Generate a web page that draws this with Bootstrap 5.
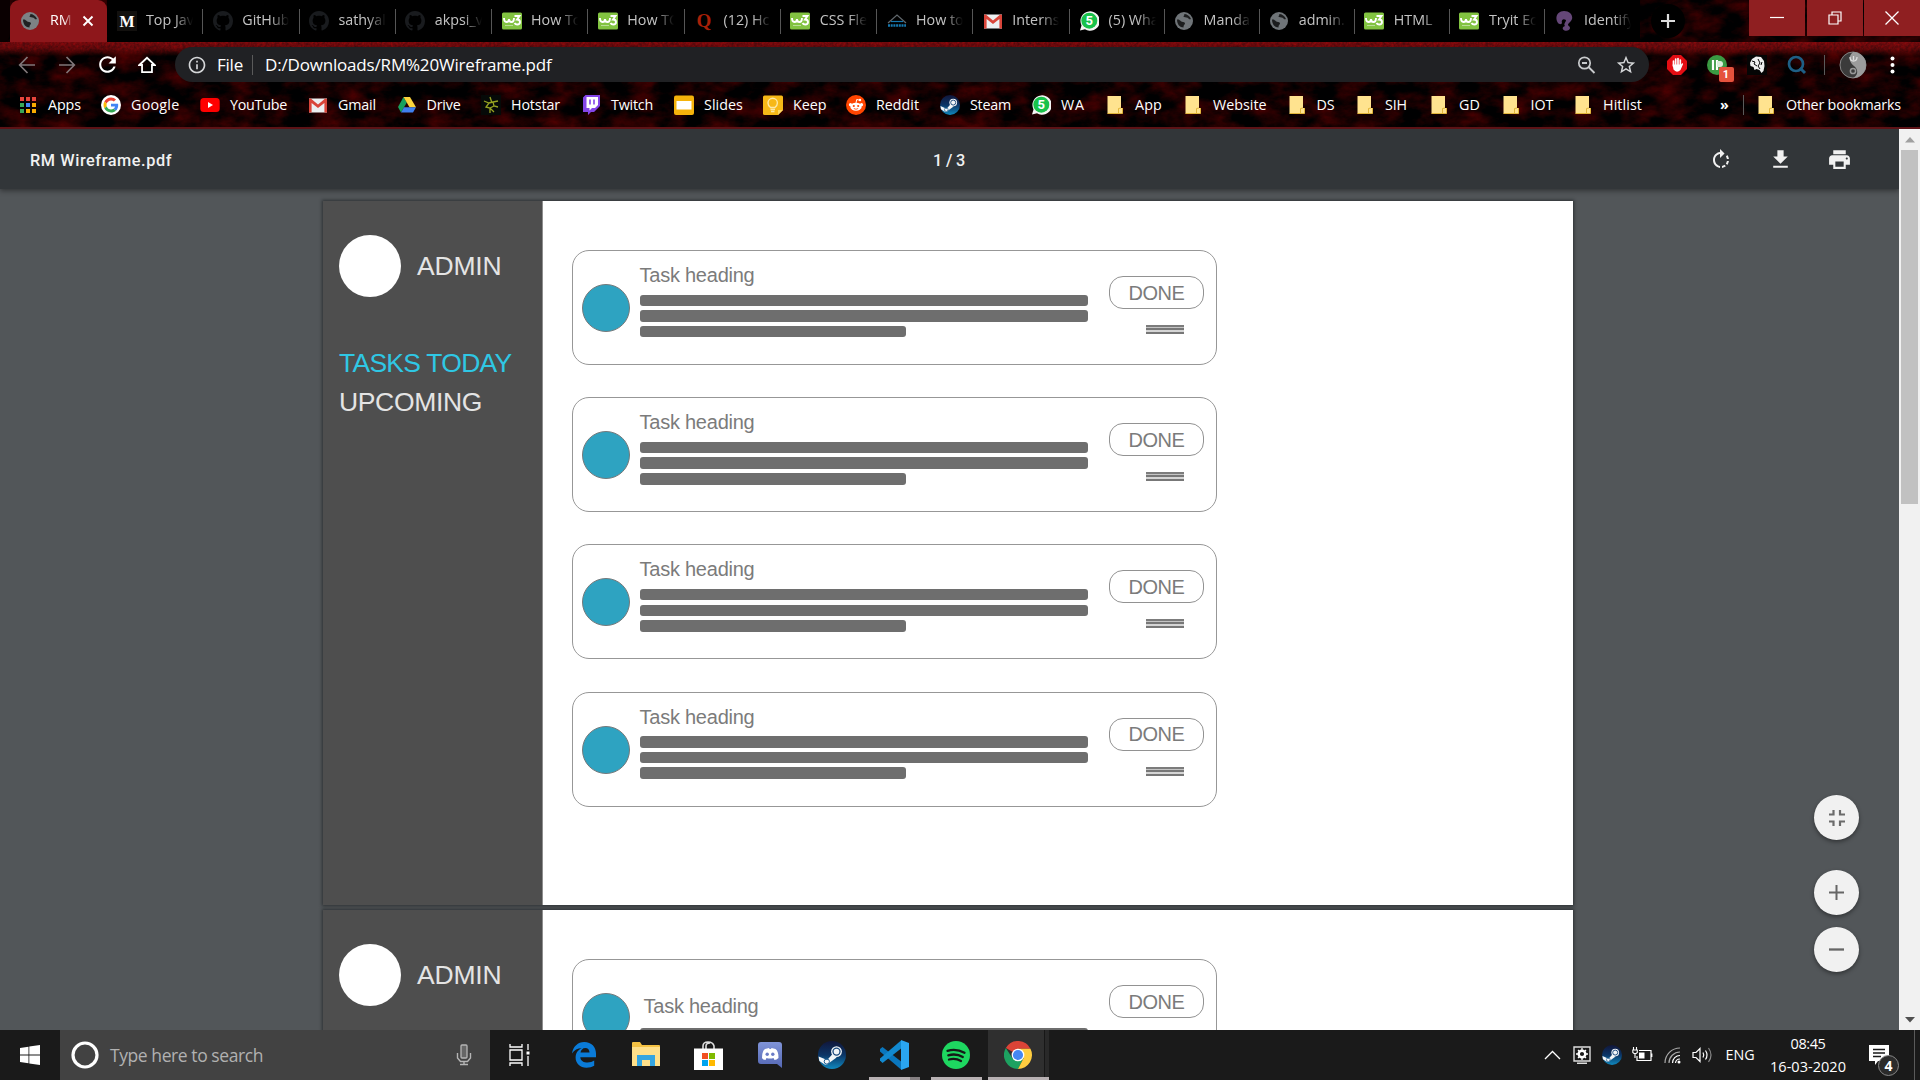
<!DOCTYPE html>
<html lang="en">
<head>
<meta charset="utf-8">
<meta name="viewport" content="width=device-width, initial-scale=1">
<title>RM Wireframe.pdf</title>
<link href="https://cdn.jsdelivr.net/npm/bootstrap@5.3.0/dist/css/bootstrap.min.css" rel="stylesheet">
<style>
body{font-family:"Open Sans","Noto Sans",sans-serif;font-size:14.3px;line-height:20px;color:#fff;background:#525659}
svg{display:block;flex:none}
.chrome-top{height:129px;background:#100102;border-bottom:2px solid #5c1216}
.leather{left:0;top:0}
.tabstrip{height:42px}
.tab-on{width:97px;margin-left:10px;background:#8e171b;border-radius:9px 9px 0 0;padding-left:10px}
.tab-first{width:10px;margin-right:-10px;background:#0a0001;border-radius:0 0 8px 0}
.tab-off{width:96.25px;background:#000;padding-left:9.5px;color:#c3c3c3}
.tab-off:nth-of-type(n+11){width:95.1px}
.tab-off:first-of-type{border-radius:0 0 0 8px}
.tab-off::after{content:"";position:absolute;right:0;top:9px;width:1px;height:25px;background:#565656}
.tab-off:last-of-type::after{display:none}
.tab-text{width:48px;height:22px;margin-left:9.500px;overflow:hidden;white-space:nowrap;-webkit-mask-image:linear-gradient(90deg,#000 60%,transparent 98%);mask-image:linear-gradient(90deg,#000 60%,transparent 98%)}
.tab-on .tab-text{width:23px;margin-left:10px}
.plus{width:34px;height:34px;border-radius:50%;background:#000;margin:4px 0 0 11px}
.winbtn{width:56px;height:36px;background:#8f1f21}
.toolbar-row{height:45px;padding:5px 0 5px 7px}
.cell40{width:40px}
.omni{width:1474px;height:35px;border-radius:18px;background:#202124;margin:0 7.500px 0 8px;padding-left:12px;font-size:17px}
.vbar{width:1px;background:#5a5a5a}
.bm-row{height:36px;padding-left:18px}
.bm{height:24px}
.bm-ico{width:20px;margin-right:10px}
.lbl{display:inline-block;white-space:nowrap}
.pdfbar{width:1899px;height:60px;padding-top:2px;background:#323639;box-shadow:0 2px 5px rgba(0,0,0,.4);font:500 16.300px Roboto,sans-serif;color:#f1f1f1;z-index:2}
.viewer{height:901px}
.scrollcol{width:21px;background:#f1f1f1;padding:0 2px}
.thumb{width:17px;height:354px;background:#c1c1c1;margin:21px 0 0}
.sheet{width:1250px;background:#fff;margin-left:323px;box-shadow:0 0 3px 1px rgba(20,24,26,.6);font-family:"Liberation Sans",Arial,sans-serif}
.side{width:220px;background:#4e4e4e;border-right:1px solid #8e8e8e;padding:34px 0 0 16px;color:#e4e4e4;font-size:26.500px;line-height:39px}
.avatar-lg{width:62px;height:62px;border-radius:50%;background:#fff;margin-right:16px}
.task{width:645px;height:115px;border:1.500px solid #979797;border-radius:17px;margin-bottom:32.200px;padding:0 12px 0 9px;color:#7b7b7b;background:#fff}
.dot{width:48px;height:48px;border-radius:50%;background:#2ea3c1;border:1px solid #74797b;margin:33px 10px 0 0}
.lines{width:448px;padding-top:11px}
.t-head{font-size:20px;line-height:27px;height:32.500px}
.stripe{height:11.500px;background:#6e6e6e;border-radius:3px;margin-bottom:4.200px}
.short{width:266.500px}
.pill{width:95px;height:33px;border:1.500px solid #929292;border-radius:14px;font-size:20px;margin:25px 0 16px 21.500px}
.grip{width:38px;height:9px;margin-left:58.500px;background:linear-gradient(#7c7c7c 0 2px,#c4c4c4 2px 3px,#777 3px 5px,#d5d5d5 5px 7px,#777 7px 9px)}
.low .lines{padding-top:33px}.low .t-head{padding-left:4px;height:35px}
.fabs{right:61px;top:666px}
.fab{width:45px;height:45px;border-radius:50%;background:#f1f1f1;box-shadow:0 2px 4px rgba(0,0,0,.4)}
.taskbar{height:50px;background:#1a1a1a}
.search{width:430px;background:#424242;color:#b1b1b1;font-size:17.500px;padding-left:11px}
.app{width:62px}
.app.run::after{content:"";position:absolute;left:6px;right:5px;bottom:0;height:3px;background:#b8b1b3}
.app.split::after{background:linear-gradient(90deg,#b8b1b3 80%,#857f81 80%)}
.app.cur{background:linear-gradient(90deg,#1a1a1a 1px,#2f2f2f 1px 57px,#171717 57px 58px,#292929 58px)}
.app.cur::after{left:1px;right:0}
.t30{width:30px}
.clock{width:90px;font-size:14.500px;line-height:23px}
.count{left:1878px;top:1055px;width:21px;height:21px;border-radius:50%;background:#2b2b2b;border:1px solid #888;font-weight:700;font-size:14px;line-height:19px}
</style>
<script src="https://cdn.jsdelivr.net/npm/bootstrap@5.3.0/dist/js/bootstrap.bundle.min.js"></script>
</head>
<body class="overflow-hidden">
<svg width="0" height="0" class="position-absolute">
<defs>
<filter id="grain" x="0" y="0" width="100%" height="100%" color-interpolation-filters="sRGB"><feTurbulence type="fractalNoise" baseFrequency=".035 .06" numOctaves="5" seed="4"/><feColorMatrix values="0.55 0 0 0 -.19  0 0 0 0 0  0 0 0 0 .004  0 0 0 0 1"/></filter>
<filter id="grain2" x="0" y="0" width="100%" height="100%" color-interpolation-filters="sRGB"><feTurbulence type="fractalNoise" baseFrequency=".35" numOctaves="3" seed="9"/><feColorMatrix values=".4 0 0 0 .26  0 0 0 0 .04  0 0 0 0 .05  0 0 0 0 1"/></filter>
<linearGradient id="fade" x2="0" y2="1"><stop offset="0" stop-color="#fff"/><stop offset=".5" stop-color="#bbb"/><stop offset="1" stop-color="#000"/></linearGradient>
<mask id="fm"><rect y="42" width="1920" height="14" fill="url(#fade)"/></mask>
<linearGradient id="stm" x2="0" y2="1"><stop offset="0" stop-color="#11163a"/><stop offset=".5" stop-color="#0b3566"/><stop offset="1" stop-color="#1089bf"/></linearGradient>
<linearGradient id="dsc" x2="0" y2="1"><stop offset="0" stop-color="#8094d8"/><stop offset="1" stop-color="#5467b4"/></linearGradient>
<symbol id="globe" viewBox="0 0 20 20"><circle cx="10" cy="10" r="9" fill="currentColor"/><path d="M3 8.500c3-.5 3 2 6 2.500 2 0 2.500 1.500 1.500 2.500-1 1-1 2-1 3-3.500 0-6.500-3-6.500-8zM10 3c1.500 1-1.500 2 0 3 1.500.5 3.500 0 4.500 1.500.5 1 1.500 1 2.500.5C16 5 13 3 10 3z" fill="#000" fill-opacity=".75"/></symbol>
<symbol id="medium" viewBox="0 0 20 20"><rect width="20" height="20" fill="#12100e"/><text x="10" y="15.500" text-anchor="middle" font-family="Liberation Serif,serif" font-weight="700" font-size="16" fill="#fff">M</text></symbol>
<symbol id="github" viewBox="0 0 16 16"><path fill="#191b1e" d="M8 0C3.580 0 0 3.580 0 8c0 3.540 2.290 6.530 5.470 7.590.4.070.55-.17.55-.38 0-.19-.01-.82-.01-1.490-2.010.37-2.530-.49-2.690-.94-.09-.23-.48-.94-.82-1.130-.28-.15-.68-.52-.01-.53.63-.01 1.080.58 1.230.82.72 1.210 1.870.87 2.330.66.070-.52.28-.87.51-1.070-1.780-.2-3.640-.89-3.640-3.950 0-.87.31-1.590.82-2.150-.08-.2-.36-1.020.080-2.120 0 0 .67-.21 2.200.82.64-.18 1.320-.27 2-.27s1.360.090 2 .27c1.530-1.040 2.200-.82 2.200-.82.44 1.100.16 1.920.080 2.120.51.56.82 1.270.82 2.150 0 3.070-1.870 3.750-3.650 3.950.29.25.54.73.54 1.480 0 1.070-.01 1.930-.01 2.200 0 .21.15.46.55.38A8 8 0 0 0 16 8c0-4.420-3.580-8-8-8"/></symbol>
<symbol id="w3" viewBox="0 0 20 20"><rect y="1.500" width="20" height="17" rx="1.500" fill="#82c341"/><path d="M2 7q0 4 2.500 4T7 8q0 3 2.500 3T12 7M12.500 5h5l-2.500 3.500q3 0 3 2.500t-2.800 2.500q-1.800 0-2.700-1.500" fill="none" stroke="#fff" stroke-width="1.900"/><path d="M3 14.500h8" stroke="#b9de95" stroke-width="1"/></symbol>
<symbol id="quora" viewBox="0 0 20 20"><text x="10" y="16" text-anchor="middle" font-family="Liberation Serif,serif" font-weight="700" font-size="19" fill="#a82008">Q</text></symbol>
<symbol id="tent" viewBox="0 0 20 20"><path d="M1 12L10 4l9 8" fill="none" stroke="#61686d" stroke-width="1.200"/><path d="M4 10.500h12" fill="none" stroke="#1578b0" stroke-width="1.200"/><path d="M1 14.500h18" stroke="#1578b0" stroke-width="2.500" stroke-dasharray="2 .7"/></symbol>
<symbol id="gmail" viewBox="0 0 20 20"><path d="M1 3.500h18v14H1z" fill="#eceff1"/><path d="M1 4v13.500h2.600V8L10 13l6.400-5v9.500H19V4l-1.500-.8L10 9.500 2.500 3.200z" fill="#d9453a"/></symbol>
<symbol id="wa" viewBox="0 0 20 20"><path d="M1 19.500l1.500-5A9.700 9.700 0 1 1 6 18.300z" fill="#f4f4f4"/><circle cx="10.300" cy="9.700" r="8" fill="#18c24b"/><text x="10.300" y="14.300" text-anchor="middle" font-family="Roboto,sans-serif" font-weight="700" font-size="13" fill="#fff">5</text></symbol>
<symbol id="head" viewBox="0 0 20 20"><path d="M4 12C0 6 4 0 10 0c6 0 9 4 8 8-1 3-4 4-4 6 0 1 2 1 2 3s-3 3.500-5.500 2.500S8 16 11 15c-2-2 1-4 1-6-3-2-5 0-4 3-1 2-3 1-4 0z" fill="#654778"/></symbol>
<symbol id="apps" viewBox="0 0 20 20"><path d="M2 2h4v4H2zM8 2h4v4H8zM14 2h4v4h-4z" fill="#e8453c"/><path d="M2 8h4v4H2zM2 14h4v4H2z" fill="#3aa757"/><path d="M8 8h4v4H8z" fill="#4285f4"/><path d="M14 8h4v4h-4zM8 14h4v4H8zM14 14h4v4h-4z" fill="#f9ab00"/></symbol>
<symbol id="google" viewBox="0 0 48 48"><circle cx="24" cy="24" r="24" fill="#fff"/><g transform="translate(6 6) scale(.75)"><path fill="#EA4335" d="M24 9.500c3.540 0 6.710 1.220 9.210 3.600l6.850-6.850C35.900 2.380 30.470 0 24 0 14.620 0 6.510 5.380 2.560 13.220l7.980 6.190C12.430 13.720 17.740 9.500 24 9.500z"/><path fill="#4285F4" d="M46.980 24.550c0-1.570-.15-3.090-.38-4.550H24v9.020h12.940c-.58 2.960-2.260 5.480-4.780 7.180l7.730 6c4.510-4.180 7.090-10.360 7.090-17.650z"/><path fill="#FBBC05" d="M10.530 28.590c-.48-1.450-.76-2.990-.76-4.590s.27-3.140.76-4.590l-7.980-6.190C.92 16.460 0 20.120 0 24s.92 7.540 2.560 10.780l7.970-6.190z"/><path fill="#34A853" d="M24 48c6.480 0 11.930-2.130 15.890-5.810l-7.730-6c-2.150 1.450-4.920 2.300-8.160 2.300-6.260 0-11.570-4.220-13.470-9.910l-7.980 6.190C6.510 42.620 14.620 48 24 48z"/></g></symbol>
<symbol id="youtube" viewBox="0 0 20 20"><rect x=".3" y="3" width="19.400" height="14" rx="3.500" fill="#f00"/><path d="M8 7l5 3-5 3z" fill="#fff"/></symbol>
<symbol id="drive" viewBox="0 0 20 20"><path d="M6.500 2L1 12l3 5.500L9.800 7.500z" fill="#17a05d"/><path d="M6.500 2h6.500l6 10.200h-6.500z" fill="#fdd33d"/><path d="M7 12.200h12L16 17.500H4z" fill="#3f7ff0"/></symbol>
<symbol id="hotstar" viewBox="0 0 20 20"><rect width="20" height="20" fill="#060a08"/><path d="M9 2l2 6M3 6l5 2 4-1 5-1M8 8l-3 4 4 1 4 4M12 7l1 4 4 1M9 13l4-2M9 13v5" fill="none" stroke="#97a322" stroke-width="1.300"/></symbol>
<symbol id="twitch" viewBox="0 0 20 20"><path d="M2 2.500L4.500 0H19v11l-6 6h-3l-3 3v-3H2z" fill="#8445e8"/><path d="M5.500 2H17v8l-3 3h-3l-2.500 2.500V13h-3z" fill="#fff"/><path d="M9 4.500v5M13 4.500v5" stroke="#8445e8" stroke-width="1.600"/></symbol>
<symbol id="slides" viewBox="0 0 20 20"><rect y=".5" width="20" height="19.500" rx="2" fill="#f5b30b"/><path d="M2.500 6h15v8.500h-15z" fill="#fff"/></symbol>
<symbol id="keep" viewBox="0 0 20 20"><path d="M1.500.5h17q1.500 0 1.500 1.500v13l-5 5H1.500Q0 20 0 18.500V2Q0 .5 1.500.5z" fill="#f7b817"/><path d="M15 20v-5h5z" fill="#fdd663"/><path d="M7.500 12.500Q5 10.500 5 8a4.700 4.700 0 0 1 9.400 0q0 2.500-2.500 4.500z M7.500 14.500h4.500M8 16.500h3.500" fill="none" stroke="#fde8a6" stroke-width="1.400"/></symbol>
<symbol id="reddit" viewBox="0 0 20 20"><circle cx="10" cy="10" r="10" fill="#ff4500"/><circle cx="4.500" cy="9.700" r="1.600" fill="#fff"/><circle cx="15.500" cy="9.700" r="1.600" fill="#fff"/><ellipse cx="10" cy="11.700" rx="5.700" ry="4" fill="#fff"/><path d="M10 8l.7-3.500 3 .7" fill="none" stroke="#fff"/><circle cx="14" cy="5" r="1.200" fill="#fff"/><circle cx="7.800" cy="11" r="1.100" fill="#ff4500"/><circle cx="12.200" cy="11" r="1.100" fill="#ff4500"/><path d="M7.800 13.500q2.200 1.500 4.400 0" fill="none" stroke="#ff4500" stroke-width=".8"/></symbol>
<symbol id="steam" viewBox="0 0 28 28"><circle cx="14" cy="14" r="14" fill="url(#stm)"/><path d="M.6 15.500l8.600 3.600 5.600-6.300 3.800 3.800-7.200 5.200a4 4 0 0 1-5.800 1L1.300 20z" fill="#f3f6f8"/><circle cx="18.500" cy="10.600" r="5.400" fill="#f3f6f8"/><circle cx="18.500" cy="10.600" r="3.500" fill="#f3f6f8" stroke="#17457a" stroke-width="1.300"/><circle cx="8.800" cy="20.500" r="2.600" fill="none" stroke="#1b5c90"/></symbol>
<symbol id="folder" viewBox="0 0 20 20"><path d="M2.500 1H16v12h1.500v5.500h-15z" fill="#ffe38f"/><path d="M13.500 18.500v-5L16 13M2.500 18.500h15V13" fill="none" stroke="#e2b63a" stroke-width="1"/></symbol>
<symbol id="fold2" viewBox="0 0 28 28"><path d="M0 2q0-1 1-1h7l2 3h17q1 0 1 1v20H0z" fill="#f5c243"/><path d="M0 6h28v19H0z" fill="#ffe08a"/><path d="M5 25V14h18v11h-5v-6h-8v6z" fill="#35a5e0"/></symbol>
<symbol id="edge" viewBox="0 0 24 26"><path fill-rule="evenodd" fill="#0a7bd8" d="M0 11.500C1 4.500 5.800 0 12.300 0 19.500 0 24 5 24 11.500V15.200H8.300c.2 3.800 3.600 5.300 7.200 5.300 2.600 0 5-.8 6.700-2v5.200c-2 1.300-4.800 2-7.700 2C8 25.700 3.600 21.500 3.600 15.500 3.600 11.300 6 7.800 9.800 6 5.500 6.300 2.200 8 0 11.500zM8.500 10.600h9c0-2.900-1.500-4.700-4.200-4.700-2.700 0-4.400 2.100-4.800 4.700z"/></symbol>
<symbol id="store" viewBox="0 0 29 29"><path d="M9 8V5q0-4 5-4t6 4v3M12 8V5q0-3 4-3" fill="none" stroke="#ddd" stroke-width="1.600"/><path d="M0 7.500h29V29H0z" fill="#fff"/><path d="M8 12h6v6H8z" fill="#f25022"/><path d="M15 12h6v6h-6z" fill="#7fba00"/><path d="M8 19h6v6H8z" fill="#00a4ef"/><path d="M15 19h6v6h-6z" fill="#ffb900"/></symbol>
<symbol id="discord" viewBox="0 0 24 26"><path d="M3 0h18q3 0 3 3v23l-5-4H3q-3 0-3-3V3q0-3 3-3z" fill="url(#dsc)"/><path d="M4 16Q4 9 7 7l4-1 .5 1h1.500l.5-1 4 1q3 2 3 9-2 2-4 2l-1-2q-3.500 1-7 0l-1 2Q5 18 4 16z" fill="#fff"/><circle cx="9.200" cy="12.200" r="1.700" fill="#6a7cc6"/><circle cx="14.800" cy="12.200" r="1.700" fill="#6a7cc6"/></symbol>
<symbol id="code" viewBox="0 0 30 30"><path d="M1 9l2.500-2L24 23l-2 6.500L1 11.500z" fill="#0a76bd"/><path d="M1 20.500l2.500 2.500L24 7l-2-6.500L1 18.500z" fill="#1289cf"/><path d="M22 0l8 3v24l-8 3V0z" fill="#2aa5f0"/></symbol>
<symbol id="spotify" viewBox="0 0 28 28"><circle cx="14" cy="14" r="14" fill="#1ed760"/><path d="M5.500 9.800q9-2.500 17 2M6.300 14.300q8-2.200 14.500 1.700M7 18.500q6.500-1.600 12 1.500" fill="none" stroke="#151a17" stroke-linecap="round" stroke-width="2.300"/></symbol>
<symbol id="chrome" viewBox="2 2 44 44"><path fill="#db4437" d="M24 24L4.900 13A22 22 0 0 1 43.600 14H24z"/><path fill="#1da261" d="M4.900 13A22 22 0 0 0 24 46l8.700-17L24 24l-8.700 5z"/><path fill="#ffcd40" d="M24 14h19.600A22 22 0 0 1 24 46l8.700-17z"/><circle cx="24" cy="24" r="10" fill="#fff"/><circle cx="24" cy="24" r="8" fill="#4587f3"/></symbol>
</defs></svg>

<div class="d-flex flex-column vh-100">
<header class="chrome-top position-relative">
<svg class="leather position-absolute" width="1920" height="127"><rect width="1920" height="127" filter="url(#grain)"/><g mask="url(#fm)"><rect y="42" width="1920" height="14" filter="url(#grain2)"/></g></svg>
<div class="tabstrip d-flex position-relative">
<div class="tab-first"></div>
<div class="tab-on d-flex align-items-center"><svg width="20" height="20" color="#7d8285"><use href="#globe"/></svg><div class="tab-text">RM</div><svg style="margin-left:9px" width="12" height="12" viewBox="0 0 12 12"><path d="M1.500 1.500l9 9M10.500 1.500l-9 9" stroke="#fff" stroke-width="1.900"/></svg></div>
<div id="tabs" class="d-flex"></div>
<div class="plus d-flex align-items-center justify-content-center"><svg width="16" height="16"><path d="M8 1v14M1 8h14" stroke="#ddd" stroke-width="2.200"/></svg></div>
<div class="d-flex ms-auto" id="winbtns"></div>
</div>
<div class="toolbar-row d-flex align-items-center position-relative">
<div class="cell40"><svg class="mx-auto" width="24" height="24" viewBox="0 0 24 24"><path d="M20 12H5M12.500 4L4.700 12l7.800 8" fill="none" stroke="#80777a" stroke-width="1.700"/></svg></div>
<div class="cell40"><svg class="mx-auto" width="24" height="24" viewBox="0 0 24 24"><path d="M4 12h15M11.500 4l7.800 8-7.800 8" fill="none" stroke="#80777a" stroke-width="1.700"/></svg></div>
<div class="cell40"><svg class="mx-auto" width="25" height="25" viewBox="0 0 24 24"><path fill="#fff" d="M17.650 6.350C16.200 4.900 14.210 4 12 4c-4.420 0-7.990 3.580-7.990 8s3.570 8 7.990 8c3.730 0 6.840-2.550 7.730-6h-2.080c-.82 2.330-3.040 4-5.650 4-3.310 0-6-2.690-6-6s2.690-6 6-6c1.660 0 3.140.69 4.220 1.780L13 11h7V4l-2.350 2.350z"/></svg></div>
<div class="cell40"><svg class="mx-auto" width="18" height="18" viewBox="0 0 20 20"><path d="M1.500 10L10 2l8.500 8h-3v8h-11v-8z" fill="none" stroke="#fff" stroke-width="2"/></svg></div>
<div class="omni d-flex align-items-center"><svg width="20" height="20" viewBox="0 0 24 24"><path fill="#d5d7d9" d="M11 7h2v2h-2zm0 4h2v6h-2zm1-9C6.480 2 2 6.480 2 12s4.480 10 10 10 10-4.480 10-10S17.520 2 12 2zm0 18c-4.410 0-8-3.590-8-8s3.590-8 8-8 8 3.590 8 8-3.590 8-8 8z"/></svg>
<span class="lbl" style="margin-left:10px" data-fit="26">File</span><span class="vbar" style="height:20px;margin:0 12px 0 9px"></span><span class="lbl" data-fit="286.500">D:/Downloads/RM%20Wireframe.pdf</span>
<div class="d-flex ms-auto align-items-center"><div class="cell40"><svg class="mx-auto" width="20" height="20" viewBox="0 0 20 20"><circle cx="8.500" cy="8" r="5.700" fill="none" stroke="#c8cacc" stroke-width="1.700"/><path d="M12.500 12l6 6M6 8h5" stroke="#c8cacc" stroke-width="1.900"/></svg></div><div class="cell40" style="margin-right:3px"><svg class="mx-auto" width="22" height="22" viewBox="0 0 24 24"><path fill="#d5d7d9" d="M22 9.240l-7.190-.62L12 2 9.190 8.630 2 9.240l5.460 4.730L5.820 21 12 17.270 18.180 21l-1.630-7.030L22 9.240zM12 15.400l-3.760 2.270 1-4.280-3.320-2.880 4.380-.38L12 6.100l1.710 4.040 4.380.38-3.320 2.880 1 4.280L12 15.400z"/></svg></div></div></div>
<div class="cell40"><svg class="mx-auto" width="20" height="20" viewBox="0 0 20 20"><path d="M6 0h8l6 6v8l-6 6H6l-6-6V6z" fill="#e40d13"/><path d="M6.500 6v5M8.700 4v7M11 3.500V11M13.300 5v7" stroke="#fff" stroke-width="1.700" stroke-linecap="round"/><path d="M5.600 9.500h8.500l1.200-1.500.8 1-2.600 6q-4 3.500-7-.5z" fill="#fff"/></svg></div>
<div class="cell40 position-relative"><svg class="mx-auto" width="20" height="20" viewBox="0 0 20 20"><circle cx="10" cy="10" r="10" fill="#3a9a43"/><path d="M6 5v10M10 5v10" stroke="#fff" stroke-width="2.200"/><path d="M10 6h3q3 0 3 3t-3 3h-3" fill="#d9ecd9"/></svg><span class="position-absolute text-center" style="left:22px;top:12px;width:15px;height:15px;background:#e5523d;border-radius:2px;font:700 11px/15px Roboto,sans-serif">1</span></div>
<div class="cell40"><svg class="mx-auto" width="20" height="20" viewBox="0 0 20 20"><rect width="20" height="20" fill="#050505"/><path d="M3 8l2-4 4-2.500 5 .5 3 4 .5 5-1 5-2 2-2-3-3-1-2 1-1-3-3-1z" fill="#eee"/><path d="M5 6l3 1-1 2 3 2M11 4l2 4-2 3 2 3M15 7l-1 3" fill="none" stroke="#050505" stroke-width="1"/></svg></div>
<div class="cell40"><svg class="mx-auto" width="20" height="20" viewBox="0 0 20 20"><circle cx="9" cy="9" r="7" fill="none" stroke="#1e5f86" stroke-width="2.700"/><path d="M13 13l5 5" stroke="#1e5f86" stroke-width="3"/></svg></div>
<div style="width:16.500px"><div class="vbar mx-auto" style="height:20px"></div></div>
<div style="width:39px"><svg class="mx-auto" width="28" height="28" viewBox="0 0 28 28"><circle cx="14" cy="14" r="13" fill="#3b3b3b" stroke="#858585"/><path d="M14 1a13 13 0 0 1 0 26c6-3 5-9 1-12s-7-9-1-14z" fill="#9c9c9c"/><circle cx="14" cy="20" r="2.600" fill="none" stroke="#999" stroke-width="1.500"/><path d="M11 6q0 4 3.500 4T18 6M14.500 5v4" fill="none" stroke="#ddd" stroke-width="1.300"/></svg></div>
<div class="cell40"><svg class="mx-auto" width="5" height="18"><circle cx="2.500" cy="2.500" r="2" fill="#fff"/><circle cx="2.500" cy="9" r="2" fill="#fff"/><circle cx="2.500" cy="15.500" r="2" fill="#fff"/></svg></div>
</div>
<div class="bm-row d-flex align-items-center position-relative" id="bms"></div>
</header>

<main class="viewer d-flex position-relative overflow-hidden">
<div class="d-flex flex-column overflow-hidden" style="width:1899px">
<div class="pdfbar d-flex align-items-center flex-shrink-0 position-relative">
<span style="padding-left:30px;width:933px"><span class="lbl" data-fit="142">RM Wireframe.pdf</span></span><span class="lbl" data-fit="32">1 / 3</span>
<div class="d-flex ms-auto me-4 gap-0 pe-1">
<svg width="26" height="26" viewBox="-1 -1 26 26" style="margin-right:34px"><path fill="#f1f1f1" d="M15.550 5.550L11 1v3.070C7.060 4.560 4 7.920 4 12s3.050 7.440 7 7.930v-2.020c-2.840-.48-5-2.940-5-5.910s2.160-5.430 5-5.910V10l4.550-4.450zM19.930 11c-.17-1.390-.72-2.730-1.620-3.890l-1.420 1.420c.54.75.88 1.600 1.020 2.470h2.020zM13 17.900v2.020c1.390-.17 2.740-.71 3.900-1.610l-1.440-1.440c-.75.54-1.590.89-2.460 1.030zm3.890-2.420l1.420 1.410c.9-1.160 1.450-2.500 1.620-3.890h-2.020c-.14.87-.48 1.720-1.020 2.480z"/></svg>
<svg width="25" height="25" viewBox="0 0 24 24" style="margin-right:34.500px"><path fill="#f1f1f1" d="M19 9h-4V3H9v6H5l7 7 7-7zM5 18v2h14v-2H5z"/></svg>
<svg width="25" height="25" viewBox="0 0 24 24" style="margin-right:19px"><path fill="#f1f1f1" d="M19 8H5c-1.660 0-3 1.340-3 3v6h4v4h12v-4h4v-6c0-1.660-1.340-3-3-3zm-3 11H8v-5h8v5zm3-7c-.55 0-1-.45-1-1s.45-1 1-1 1 .45 1 1-.45 1-1 1zm-1-9H6v4h12V3z"/></svg>
</div></div>
<section class="sheet d-flex flex-shrink-0" style="height:703.500px;margin-top:12px">
<aside class="side"><div class="d-flex align-items-center"><div class="avatar-lg"></div><span class="lbl" data-fit="84.500">ADMIN</span></div>
<div style="margin-top:47px;color:#2fc7e4"><span class="lbl" data-fit="172.500">TASKS TODAY</span></div><div><span class="lbl" data-fit="143">UPCOMING</span></div></aside>
<div class="tasks" style="padding:49px 0 0 28.500px"></div></section>
<section class="sheet d-flex flex-shrink-0" style="height:704px;margin-top:5.500px">
<aside class="side"><div class="d-flex align-items-center"><div class="avatar-lg"></div><span class="lbl" data-fit="84.500">ADMIN</span></div></aside>
<div class="tasks low" style="padding:49px 0 0 28.500px"></div></section>
</div>
<div class="scrollcol position-relative"><div class="thumb"></div>
<svg class="position-absolute" width="10" height="6" style="left:6px;top:8px"><path d="M5 0l5 5.500H0z" fill="#a0a0a0"/></svg><svg class="position-absolute" width="10" height="6" style="left:6px;bottom:7px"><path d="M5 5.500L10 0H0z" fill="#505050"/></svg></div>
<div class="fabs position-absolute">
<div class="fab d-flex align-items-center justify-content-center" style="margin-bottom:30px"><svg width="16" height="16"><path d="M0 4.500h4.500V0M11 0v4.500h5M0 11.500h4.500V16M16 11.500h-5V16" fill="none" stroke="#6b6b6b" stroke-width="2.200"/></svg></div>
<div class="fab d-flex align-items-center justify-content-center" style="margin-bottom:12px"><svg width="15" height="15"><path d="M7.500 0v15M0 7.500h15" stroke="#666" stroke-width="2"/></svg></div>
<div class="fab d-flex align-items-center justify-content-center"><svg width="15" height="15"><path d="M0 7.500h15" stroke="#666" stroke-width="2.300"/></svg></div>
</div>
</main>

<footer class="taskbar d-flex position-relative flex-shrink-0">
<div class="d-flex align-items-center justify-content-center" style="width:60px"><svg width="20" height="20" viewBox="0 0 20 20"><path d="M0 3l8.500-1.300v7.800H0zM9.300 1.500L20 0v9.500H9.300zM0 10.400h8.500v7.900L0 17zM9.300 10.400H20V20L9.300 18.400z" fill="#fff"/></svg></div>
<div class="search d-flex align-items-center"><svg width="28" height="28"><circle cx="14" cy="14" r="12" fill="none" stroke="#fff" stroke-width="3.200"/></svg><span class="lbl" style="margin-left:11px" data-fit="153">Type here to search</span>
<svg class="ms-auto" width="16" height="22" viewBox="0 0 16 22" style="margin-right:18px"><rect x="5" y="1" width="6" height="13" rx="1" fill="#666" stroke="#b5b5b5" stroke-width="1.300"/><path d="M1.500 9v5l3 3.500h7l3-3.500V9M8 17v4M4 20.500h8" fill="none" stroke="#b5b5b5" stroke-width="1.400"/></svg></div>
<div class="app d-flex align-items-center" style="width:63px;padding-left:19px"><svg width="22" height="22" viewBox="0 0 22 22"><path d="M1 0v3h12V0M1 6h12v10H1zM1 22v-3h12v3M19 0v6M19 12v10" fill="none" stroke="#fff" stroke-width="1.300"/><path d="M17.500 7.500h3v3h-3z" fill="#fff"/></svg></div>
<div id="apps-run" class="d-flex"></div>
<div class="d-flex align-items-center ms-auto" style="width:383px">
<div class="t30"><svg class="mx-auto" width="17" height="10"><path d="M1 9l7.500-7.500L16 9" fill="none" stroke="#fff" stroke-width="1.300"/></svg></div>
<div class="t30"><svg class="mx-auto" width="18" height="18" viewBox="0 0 18 18"><path d="M1 1h16v14H1zM4 17.300h10" fill="none" stroke="#ddd" stroke-width="1.400"/><circle cx="9" cy="8" r="3.300" fill="none" stroke="#fff" stroke-width="2.400"/><path d="M9 2v12M3 8h3M12 8h3M5 4l8 8M13 4l-8 8" stroke="#fff" stroke-width="1.300"/><circle cx="9" cy="8" r="2" fill="#1a1a1a"/></svg></div>
<div class="t30"><svg class="mx-auto" width="20" height="20"><use href="#steam"/></svg></div>
<div class="t30"><svg class="mx-auto" width="21" height="16" viewBox="0 0 21 16"><path d="M7 3.500h12v10H5V9M19.800 6.500v3.500" fill="none" stroke="#fff" stroke-width="1.200"/><path d="M7 5.500h5.500v6H7z" fill="#fff"/><path d="M1.500 0v3M4.500 0v3M.8 3h4.500v2.500l-1.200 1H2l-1.200-1zM3 6v5" fill="none" stroke="#fff" stroke-width="1.100"/></svg></div>
<div class="t30"><svg class="mx-auto" width="17" height="17" viewBox="0 0 17 17"><path d="M1 16A15 15 0 0 1 16 1M5 16A11 11 0 0 1 16 5" fill="none" stroke="#aaa" stroke-width="1.200"/><path d="M8.500 16A7.500 7.500 0 0 1 16 8.500M11.500 16a4.500 4.500 0 0 1 4.500-4" fill="none" stroke="#fff" stroke-width="1.200"/><circle cx="15" cy="15" r="1.500" fill="#fff"/></svg></div>
<div class="t30"><svg class="mx-auto" width="21" height="18" viewBox="0 0 21 18"><path d="M1 6.500h3l4-4v13l-4-4H1zM11 6.500q1.500 2.500 0 5M13.500 4.500q3 4.500 0 9" fill="none" stroke="#fff" stroke-width="1.200"/><path d="M16.500 2q5 7 0 14" fill="none" stroke="#888" stroke-width="1.200"/></svg></div>
<div class="text-center" style="width:46px"><span class="lbl" data-fit="29">ENG</span></div>
<div class="clock text-center"><div><span class="lbl" data-fit="35">08:45</span></div><div><span class="lbl" data-fit="76">16-03-2020</span></div></div>
<div style="width:61px;padding-left:16px"><svg width="21" height="20" viewBox="0 0 21 20"><path d="M0 0h20v16H9l-3 4v-4H0z" fill="#fff"/><path d="M4 4.500h12M4 8h12M4 11.500h8" stroke="#1a1a1a" stroke-width="1.300"/></svg></div>
<div class="vbar align-self-stretch"></div>
</div>
</footer>
</div>
<div class="count position-absolute text-center">4</div>

<script>
const use = (id, s = 20, h = s) => `<svg width="${s}" height="${h}" color="#6f7478"><use href="#${id}"/></svg>`;
const tabs = [["medium","Top Jav"],["github","GitHub"],["github","sathyal"],["github","akpsi_v"],["w3","How Tc"],["w3","How TC"],["quora","(12) Hc"],["w3","CSS Fle"],["tent","How to"],["gmail","Interns"],["wa","(5) Wha"],["globe","Manda"],["globe","admin."],["w3","HTML"],["w3","Tryit Ec"],["head","Identify"]];
document.getElementById("tabs").innerHTML = tabs.map(([i, t]) =>
  `<div class="tab-off position-relative d-flex align-items-center">${use(i)}<div class="tab-text">${t}</div></div>`).join("");

// [icon, label, label width, start of item]
const marks = [["apps","Apps",33,18],["google","Google",48.5,101],["youtube","YouTube",57,200],["gmail","Gmail",38,308],["drive","Drive",34,396.500],["hotstar","Hotstar",49,481],["twitch","Twitch",42,581],["slides","Slides",39,674],["keep","Keep",33.500,763],["reddit","Reddit",43,846],["steam","Steam",41,940],["wa","WA",24,1031],["folder","App",27,1105],["folder","Website",53.500,1183],["folder","DS",18,1286.500],["folder","SIH",22,1355],["folder","GD",21,1429],["folder","IOT",23,1500.500],["folder","Hitlist",39,1573]];
document.getElementById("bms").innerHTML = marks.map(([i, t, w, x], n) =>
  `<div class="bm d-flex align-items-center" style="width:${(n + 1 < marks.length ? marks[n + 1][3] : 1720) - x}px"><div class="bm-ico">${use(i)}</div><span class="lbl" data-fit="${w}">${t}</span></div>`).join("") +
  `<span class="lbl fw-bold" style="width:23px">»</span><span class="vbar" style="height:20px;margin-right:12px"></span><div class="bm d-flex align-items-center"><div class="bm-ico">${use("folder")}</div><span class="lbl" data-fit="115">Other bookmarks</span></div>`;

const task = `<div class="task d-flex"><div class="dot flex-shrink-0"></div><div class="lines flex-shrink-0"><div class="t-head"><span class="lbl" data-fit="115">Task heading</span></div><div class="stripe"></div><div class="stripe"></div><div class="stripe short"></div></div><div class="flex-shrink-0"><div class="pill d-flex align-items-center justify-content-center"><span class="lbl" data-fit="56">DONE</span></div><div class="grip"></div></div></div>`;
document.querySelectorAll(".tasks").forEach(e => e.innerHTML = task.repeat(e.classList.contains("low") ? 1 : 4));

const apps = [["edge",24,26,""],["fold2",28,28,""],["store",29,29,""],["discord",24,26,""],["steam",28,28,""],["code",30,30,"run split"],["spotify",28,28,"run"],["chrome",28,28,"run cur"]];
document.getElementById("apps-run").innerHTML = apps.map(([i, w, h, c]) => `<div class="app position-relative d-flex align-items-center justify-content-center ${c}">${use(i, w, h)}</div>`).join("");

document.getElementById("winbtns").innerHTML = ['<path d="M0 6.500h14" stroke="#fff" stroke-width="1.200"/>','<path d="M1 4h9v9H1zM4 4V1h9v9h-3" fill="none" stroke="#fff" stroke-width="1.200"/>','<path d="M.5.5l13 13M13.500.5l-13 13" stroke="#fff" stroke-width="1.300"/>'].map((p, n) => `<div class="winbtn d-flex align-items-center justify-content-center" style="margin-left:${n ? 1.500 : 0}px"><svg width="14" height="14">${p}</svg></div>`).join("");

// Spread each label's letters so that the word takes its set width
document.querySelectorAll("[data-fit]").forEach(e => {
  const w = e.getBoundingClientRect().width;
  e.style.letterSpacing = ((e.dataset.fit - w) / e.textContent.length).toFixed(3) + "px";
});
</script>
</body>
</html>
